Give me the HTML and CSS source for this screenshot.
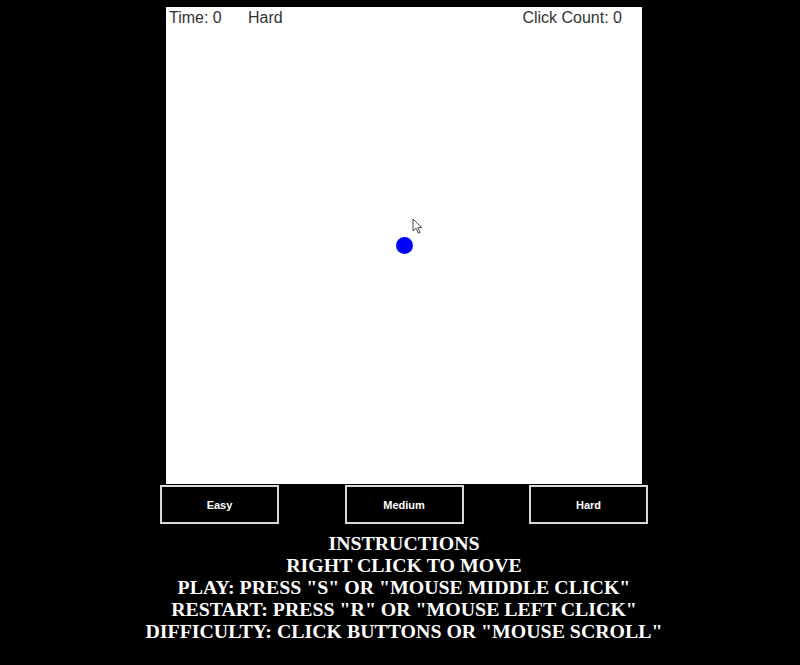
FILE: index.html
```html
<!DOCTYPE html>
<html>
<head>
<meta charset="utf-8">
<link rel="stylesheet" href="styles.css">
</head>
<body>
<div class="page">
  <div class="canvas">
    <div class="hud">
      <span class="time">Time: 0</span>
      <span class="level">Hard</span>
      <span class="clicks">Click Count: 0</span>
    </div>
    <div class="ball"></div>
    <svg class="cursor" width="12" height="17" viewBox="0 0 12 17">
      <path d="M1 1 L1 13 L4 10.2 L6.3 15.2 L8 14.4 L5.8 9.6 L9.8 9.6 Z" fill="#fff" stroke="#333" stroke-width="0.9" stroke-linejoin="round"/>
    </svg>
  </div>
  <div class="buttons">
    <button class="btn">Easy</button>
    <button class="btn">Medium</button>
    <button class="btn">Hard</button>
  </div>
  <div class="instructions">
    <div>INSTRUCTIONS</div>
    <div>RIGHT CLICK TO MOVE</div>
    <div>PLAY: PRESS "S" OR "MOUSE MIDDLE CLICK"</div>
    <div>RESTART: PRESS "R" OR "MOUSE LEFT CLICK"</div>
    <div>DIFFICULTY: CLICK BUTTONS OR "MOUSE SCROLL"</div>
  </div>
</div>
</body>
</html>
```
FILE: styles.css
```css
html, body {
  margin: 0;
  padding: 0;
  background: #000;
  width: 800px;
  height: 665px;
  overflow: hidden;
}
.page {
  width: 808px;
  display: flex;
  flex-direction: column;
  align-items: center;
  padding-top: 7px;
}
.canvas {
  position: relative;
  width: 476px;
  height: 477px;
  background: #fff;
}
.hud {
  position: relative;
  height: 22px;
  font-family: "Liberation Sans", Arial, sans-serif;
  font-size: 16px;
  color: #333;
  line-height: 22px;
  padding-left: 3px;
  display: flex;
}
.time { width: 79px; }
.clicks { margin-left: auto; margin-right: 20px; }
.ball {
  position: absolute;
  left: 230px;
  top: 230px;
  width: 17px;
  height: 17px;
  border-radius: 50%;
  background: #0000ff;
}
.cursor {
  position: absolute;
  left: 246px;
  top: 211px;
}
.buttons {
  width: 488px;
  display: flex;
  justify-content: space-between;
  margin-top: 1px;
}
.btn {
  width: 119px;
  height: 39px;
  background: #000;
  border: 2px solid #d8d8d8;
  color: #fff;
  font-family: "Liberation Sans", Arial, sans-serif;
  font-size: 11px;
  font-weight: bold;
  padding: 0;
}
.instructions {
  margin-top: 8px;
  font-family: "Liberation Serif", "Times New Roman", serif;
  font-weight: bold;
  font-size: 19.85px;
  line-height: 22px;
  color: #fff;
  text-align: center;
}
```
